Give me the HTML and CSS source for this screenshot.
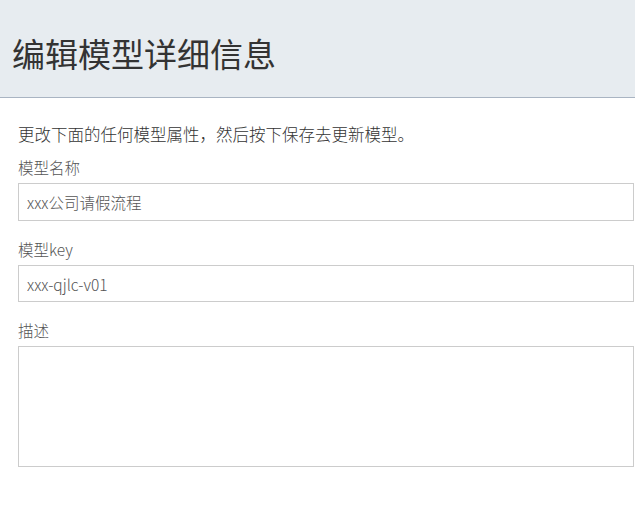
FILE: index.html
```html
<!DOCTYPE html>
<html lang="zh-CN">
<head>
<meta charset="utf-8">
<title>编辑模型详细信息</title>
<link rel="stylesheet" href="styles.css">
</head>
<body>
<header class="page-header">
  <h1 class="page-title">编辑模型详细信息</h1>
</header>
<main class="content">
  <p class="intro">更改下面的任何模型属性，然后按下保存去更新模型。</p>
  <div class="field">
    <label class="field-label" for="name">模型名称</label>
    <input class="field-input" id="name" type="text" value="xxx公司请假流程">
  </div>
  <div class="field">
    <label class="field-label" for="key">模型key</label>
    <input class="field-input field-input-short" id="key" type="text" value="xxx-qjlc-v01">
  </div>
  <div class="field">
    <label class="field-label" for="desc">描述</label>
    <textarea class="field-textarea" id="desc"></textarea>
  </div>
</main>
</body>
</html>
```
FILE: styles.css
```css
html, body {
  margin: 0;
  padding: 0;
  background: #ffffff;
  font-family: "Noto Sans CJK SC", "Noto Sans", sans-serif;
  color: #333333;
}

.page-header {
  height: 97px;
  background: #e7ecf0;
  border-bottom: 1px solid #a9b4c2;
  display: flex;
  align-items: center;
  padding-left: 12px;
  box-sizing: content-box;
}

.page-title {
  margin: 0;
  font-size: 33px;
  font-weight: normal;
  line-height: 40px;
  color: #333333;
  padding-top: 9px;
}

.content {
  padding: 24px 1px 0 18px;
  display: flex;
  flex-direction: column;
}

.intro {
  margin: 0 0 12px;
  font-size: 16.5px;
  line-height: 24px;
  color: #333333;
  font-weight: 300;
}

.field {
  display: flex;
  flex-direction: column;
  gap: 7px;
  margin-bottom: 19px;
}

.field-label {
  font-size: 15.5px;
  line-height: 18px;
  color: #555555;
  font-weight: 300;
}

.field-input,
.field-textarea {
  box-sizing: border-box;
  width: 100%;
  margin: 0;
  border: 1px solid #cccccc;
  background: #ffffff;
  font-family: "Noto Sans CJK SC", "Noto Sans", sans-serif;
  font-size: 15.5px;
  font-weight: 300;
  color: #555555;
  padding: 0 8px;
  outline: none;
  border-radius: 0;
}

.field-input {
  height: 38px;
}

.field-input-short {
  height: 37px;
}

.field-textarea {
  height: 121px;
  resize: none;
}
```
